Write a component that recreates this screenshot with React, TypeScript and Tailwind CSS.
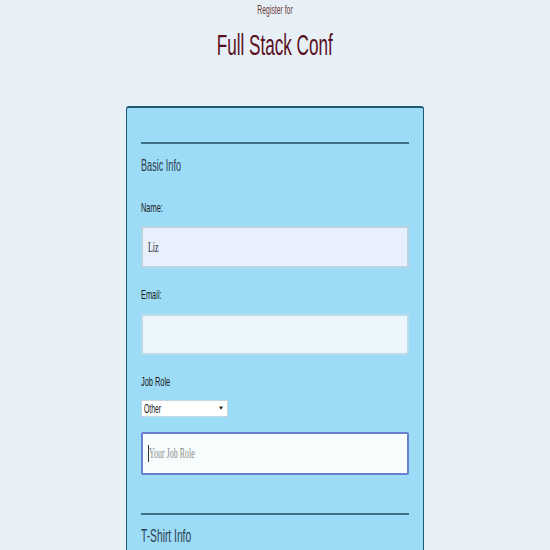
const sans = { fontFamily: '"Liberation Sans", Arial, sans-serif' };
const serif = { fontFamily: '"Liberation Serif", "Times New Roman", serif' };

// the reference is squeezed sideways, so every text run is narrowed the same way
function Squeeze({ children, center }: { children: React.ReactNode; center?: boolean }) {
  return (
    <span className={`inline-block whitespace-nowrap scale-x-[0.57] ${center ? "origin-center" : "origin-left"}`}>
      {children}
    </span>
  );
}

export default function App() {
  return (
    <div className="h-[550px] overflow-hidden bg-[#e8f0f7] text-[#1a1a1a]" style={sans}>
      <header className="flex flex-col items-center pt-[3px]">
        <p className="text-[12px] leading-[14px] text-[#6b3a3a]">
          <Squeeze center>Register for</Squeeze>
        </p>
        <h1 className="mt-[10px] text-[30px] leading-[36px] text-[#5a0f1e]">
          <Squeeze center>Full Stack Conf</Squeeze>
        </h1>
      </header>

      <form className="mx-auto mt-[43px] w-[298px] rounded-t-[3px] border border-t-2 border-[#1d5a72] bg-[#9ddcf6] px-[14px] pt-[34px]">
        <fieldset>
          <div className="h-[2px] bg-[#3f6f82]" />
          <h2 className="mt-[14px] text-[16px] leading-[16px] text-[#2c3e50]">
            <Squeeze>Basic Info</Squeeze>
          </h2>

          <label className="mt-[28px] block text-[13px] leading-[12px]">
            <Squeeze>Name:</Squeeze>
          </label>
          <div className="mt-[12px] flex h-[42px] items-center border-2 border-[#b9d3e0] bg-[#e8f0fe] px-[5px] text-[14px] text-[#222]" style={serif}>
            <Squeeze>Liz</Squeeze>
          </div>

          <label className="mt-[21px] block text-[13px] leading-[12px]">
            <Squeeze>Email:</Squeeze>
          </label>
          <div className="mt-[13px] h-[41px] border-2 border-[#bcdbe8] bg-[#eaf6fc]" />

          <label className="mt-[21px] block text-[13px] leading-[12px]">
            <Squeeze>Job Role</Squeeze>
          </label>
          <div className="mt-[12px] flex h-[17px] w-[87px] items-center justify-between border border-[#c8d8e0] bg-white pl-[2px] pr-[3px] text-[12px]">
            <Squeeze>Other</Squeeze>
            <span className="text-[6px]">▼</span>
          </div>
          <div className="mt-[15px] flex h-[43px] items-center rounded-[2px] border-2 border-[#6b7fd0] bg-[#f7fcfd] px-[5px] text-[14px] text-[#8a8a8a]" style={serif}>
            <span className="h-[17px] w-px shrink-0 bg-[#333]" />
            <Squeeze>Your Job Role</Squeeze>
          </div>
        </fieldset>

        <fieldset className="mt-[38px]">
          <div className="h-[2px] bg-[#3f6f82]" />
          <h2 className="mt-[12px] text-[18px] leading-[18px] text-[#2c3e50]">
            <Squeeze>T-Shirt Info</Squeeze>
          </h2>
          <div className="h-[40px]" />
        </fieldset>
      </form>
    </div>
  );
}
